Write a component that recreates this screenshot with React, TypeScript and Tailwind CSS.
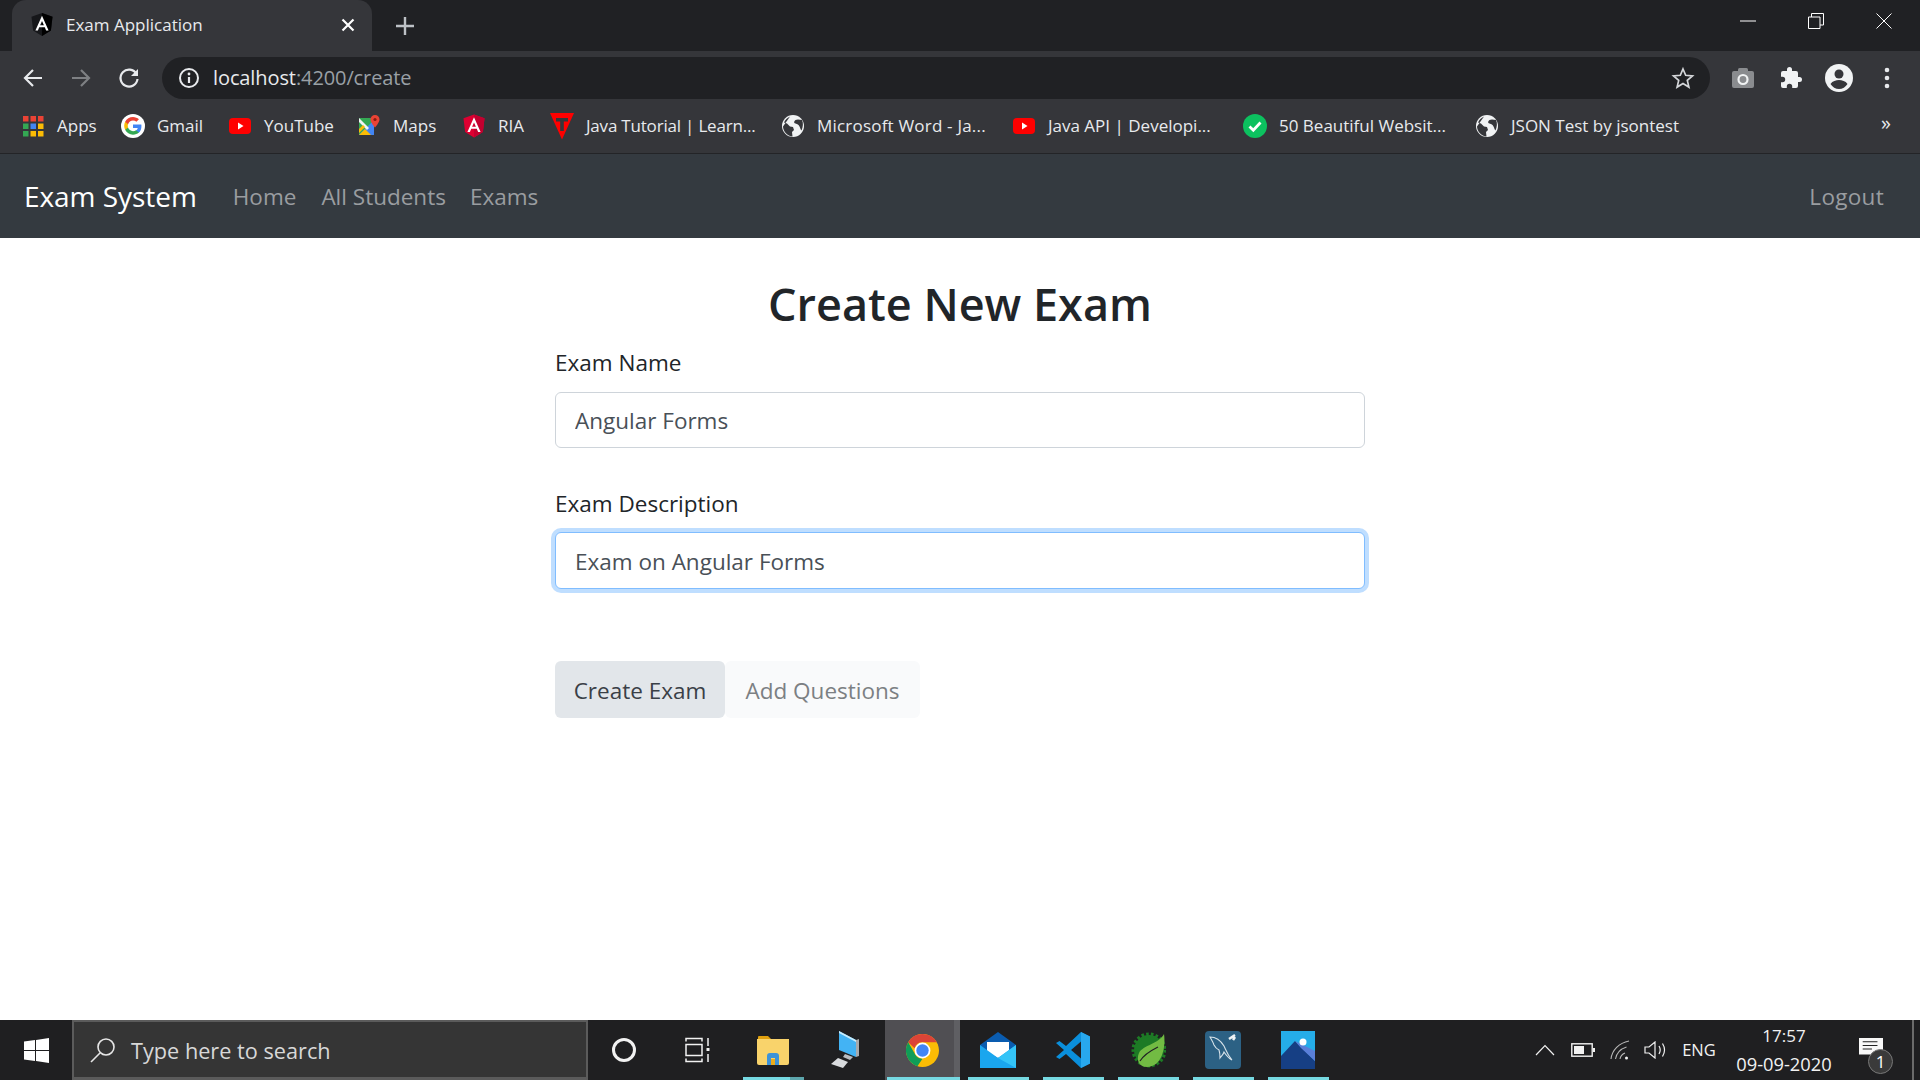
import React from "react";

const ui = "font-['Open_Sans','Noto_Sans',sans-serif]";

function Globe() {
  return (
    <svg width="24" height="24" viewBox="0 0 24 24">
      <circle cx="12" cy="12" r="11" fill="#f1f3f4" />
      <path d="M9 2.500c-2 1-5 3-6 6l3 1 3 3 3 .5 1 3-2 2 .5 4.500c-5-.5-9.500-5-9.500-10M21 6c-2-.5-5-1-6.500 0s-2 3 0 3.500 3 1 4 3 1 3 2 4c1.500-3.500 2-7.500.5-10.500z" fill="#35363a" />
    </svg>
  );
}

function YouTubeIcon() {
  return (
    <svg width="24" height="24" viewBox="0 0 24 24">
      <rect x="1" y="4" width="22" height="16" rx="4" fill="#f00" />
      <path d="M10 8.500v7l5.500-3.500z" fill="#fff" />
    </svg>
  );
}

function GoogleIcon() {
  return (
    <svg width="24" height="24" viewBox="0 0 48 48">
      <circle cx="24" cy="24" r="24" fill="#fff" />
      <g transform="translate(6 6) scale(.75)">
        <path fill="#4285F4" d="M46.500 24.500c0-1.600-.1-3.100-.4-4.500H24v9h12.700c-.6 3-2.200 5.400-4.700 7.100v5.900h7.600c4.400-4.100 6.900-10.100 6.900-17.500z" />
        <path fill="#34A853" d="M24 47c6.300 0 11.700-2.100 15.600-5.700L32 35.400c-2.100 1.400-4.800 2.300-8 2.300-6.100 0-11.300-4.100-13.200-9.700H3v6.100C6.900 41.800 14.800 47 24 47z" />
        <path fill="#FBBC05" d="M10.800 28c-.5-1.400-.8-2.900-.8-4.500s.3-3.100.8-4.500v-6.100H3C1.400 16 .5 19.600.5 23.500S1.400 31 3 34.100l7.800-6.100z" />
        <path fill="#EA4335" d="M24 9.300c3.500 0 6.600 1.200 9.100 3.600l6.700-6.700C35.700 2.400 30.300 0 24 0 14.800 0 6.900 5.200 3 12.900l7.800 6.100C12.700 13.400 17.900 9.300 24 9.300z" />
      </g>
    </svg>
  );
}

function AppsIcon() {
  const colors = ["#ea4335", "#ea4335", "#ea4335", "#34a853", "#4285f4", "#fbbc05", "#34a853", "#fbbc05", "#fbbc05"];
  return (
    <svg width="24" height="24" viewBox="0 0 24 24">
      {colors.map((c, i) => (
        <rect key={i} x={2 + (i % 3) * 7.500} y={2 + Math.floor(i / 3) * 7.500} width="5.500" height="5.500" fill={c} />
      ))}
    </svg>
  );
}

function MapsIcon() {
  return (
    <svg width="24" height="24" viewBox="0 0 24 24">
      <path d="M2 4h15v17H2z" fill="#34a853" />
      <path d="M2 21 17 6v15z" fill="#4285f4" />
      <path d="M2 21l6-6 6 6z" fill="#fbbc05" />
      <path d="M2 4l10 10-2 2-8-8z" fill="#f1f3f4" />
      <path d="M2 15l4-4 2 2-6 6z" fill="#fbbc05" />
      <path d="M18 1a4.500 4.500 0 0 0-4.500 4.500c0 3 4.500 8 4.500 8s4.500-5 4.500-8A4.500 4.500 0 0 0 18 1z" fill="#ea4335" />
      <circle cx="18" cy="5.500" r="1.600" fill="#8a1c12" />
    </svg>
  );
}

function AngularIcon({ bg, dark, size = 24 }: { bg: string; dark: string; size?: number }) {
  return (
    <svg width={size} height={size} viewBox="0 0 24 24">
      <path d="M12 .5 1.500 4.200l1.600 13.900L12 23.500l8.900-5.400 1.600-13.900z" fill={bg} />
      <path d="M12 .5v23l8.900-5.400 1.600-13.900z" fill={dark} />
      <path d="M12 3.200 5.400 18h2.500l1.300-3.300h5.600l1.300 3.300h2.500zm0 5.300 1.900 4.300h-3.800z" fill="#fff" />
    </svg>
  );
}

function TIcon() {
  return (
    <svg width="24" height="28" viewBox="0 0 24 28">
      <path d="M0 1h24L12 27.500z" fill="#f00" />
      <path d="M6 6h12v3.500h-4.200V19h-3.600V9.500H6z" fill="#35363a" />
    </svg>
  );
}

function CheckIcon() {
  return (
    <svg width="24" height="24" viewBox="0 0 24 24">
      <circle cx="12" cy="12" r="12" fill="#0cc15f" />
      <path d="M6.500 12.500l3.800 3.700 7.200-7.700" stroke="#fff" strokeWidth="2.800" fill="none" />
    </svg>
  );
}

function Bm({ icon, label, w, t = "tracking-[0px]" }: { icon: React.ReactNode; label: string; w: string; t?: string }) {
  return (
    <div className={`flex items-center gap-[12px] shrink-0 ${w}`}>
      <span className="w-[24px] h-[24px] flex items-center justify-center shrink-0">{icon}</span>
      <span className={`text-[17px] text-[#e8eaed] whitespace-nowrap leading-none mt-[-2px] ${t}`}>{label}</span>
    </div>
  );
}

function Slot({ active, strip, hl, children }: { active?: boolean; strip?: boolean; hl?: boolean; children?: React.ReactNode }) {
  return (
    <div className={`relative w-[75px] h-[60px] flex items-center justify-center shrink-0 ${hl ? "bg-[#504f53]" : ""}`}>
      {children}
      {active && <span className={`absolute bottom-0 h-[3px] bg-[#76d9e2] ${strip ? "left-[2px] right-0" : "left-[8px] right-[6px]"}`} />}
    </div>
  );
}

export default function App() {
  return (
    <div className={`w-[1920px] h-[1080px] flex flex-col overflow-hidden bg-white ${ui}`}>
      {/* tab strip */}
      <div className="h-[51px] bg-[#202124] flex items-end shrink-0 relative">
        <div className="ml-[12px] w-[360px] h-[51px] bg-[#35363a] rounded-t-[14px] flex items-center pl-[18px] pr-[16px] shrink-0">
          <span className="w-[24px] flex justify-center mt-[-2px]">
            <AngularIcon bg="#16171a" dark="#000" size={25} />
          </span>
          <span className="ml-[12px] text-[17px] text-[#e8eaed] leading-none mt-[-2px]">Exam Application</span>
          <span className="ml-auto w-[16px] h-[16px] flex items-center justify-center mt-[-2px]">
            <svg width="14" height="14" viewBox="0 0 14 14"><path d="M1.500 1.500l11 11M12.500 1.500l-11 11" stroke="#fff" strokeWidth="2.200" /></svg>
          </span>
        </div>
        <div className="ml-[24px] h-[51px] flex items-center mt-[-2px]">
          <svg width="18" height="18" viewBox="0 0 18 18"><path d="M9 0v18M0 9h18" stroke="#bdc1c6" strokeWidth="2.400" /></svg>
        </div>
        <div className="ml-auto h-[42px] self-start flex items-center">
          <span className="w-[68px] flex justify-center">
            <svg width="16" height="2" viewBox="0 0 16 2"><path d="M0 1h16" stroke="#fff" strokeWidth="1" /></svg>
          </span>
          <span className="w-[68px] flex justify-center">
            <svg width="16" height="16" viewBox="0 0 16 16" fill="none" stroke="#fff"><path d="M.5 4h11.500v11.500H.5zM3.500 4V.5h12v11.500H12" /></svg>
          </span>
          <span className="w-[68px] flex justify-center mr-[2px]">
            <svg width="16" height="16" viewBox="0 0 16 16" stroke="#fff"><path d="M.5.500l15 15M15.500.500l-15 15" /></svg>
          </span>
        </div>
      </div>

      {/* toolbar */}
      <div className="h-[48px] bg-[#35363a] flex items-center shrink-0 pl-[9px] pt-[6px]">
        <span className="w-[48px] flex justify-center">
          <svg width="24" height="24" viewBox="0 0 24 24"><path d="M21 12H5M12 4l-8 8 8 8" stroke="#e8eaed" strokeWidth="2.200" fill="none" /></svg>
        </span>
        <span className="w-[48px] flex justify-center">
          <svg width="24" height="24" viewBox="0 0 24 24"><path d="M3 12h16M12 4l8 8-8 8" stroke="#7e8083" strokeWidth="2.200" fill="none" /></svg>
        </span>
        <span className="w-[48px] flex justify-center">
          <svg width="24" height="24" viewBox="0 0 24 24"><path d="M19.500 8A8.500 8.500 0 1 0 20.500 13" stroke="#e8eaed" strokeWidth="2.200" fill="none" /><path d="M21 3v7h-7z" fill="#e8eaed" /></svg>
        </span>
        <div className="ml-[9px] w-[1548px] h-[42px] rounded-full bg-[#202124] flex items-center pl-[16px] pr-[15px] shrink-0">
          <svg width="22" height="22" viewBox="0 0 22 22" fill="none"><circle cx="11" cy="11" r="9" stroke="#e8eaed" strokeWidth="2" /><path d="M11 10v6" stroke="#e8eaed" strokeWidth="2.200" /><circle cx="11" cy="7" r="1.400" fill="#e8eaed" /></svg>
          <span className="ml-[13px] text-[20px] leading-none tracking-[-0.1px] text-[#e8eaed]">localhost<span className="text-[#9aa0a6]">:4200/create</span></span>
          <span className="ml-auto flex">
            <svg width="24" height="24" viewBox="0 0 24 24"><path d="M12 3l2.700 6.300 6.800.6-5.200 4.500 1.600 6.700L12 17.500l-5.900 3.600 1.600-6.700-5.200-4.500 6.800-.6z" fill="none" stroke="#d5d7da" strokeWidth="1.700" /></svg>
          </span>
        </div>
        <span className="ml-[9px] w-[48px] flex justify-center">
          <svg width="24" height="24" viewBox="0 0 24 24"><rect x="1" y="5" width="22" height="17" rx="2" fill="#8a8c8f" /><rect x="7" y="2" width="10" height="5" rx="1.500" fill="#8a8c8f" /><circle cx="12" cy="13.500" r="4.500" fill="none" stroke="#f1f3f4" strokeWidth="2.200" /></svg>
        </span>
        <span className="w-[48px] flex justify-center">
          <svg width="24" height="24" viewBox="0 0 24 24"><path d="M20.500 11H19V7a2 2 0 0 0-2-2h-4V3.500a2.500 2.500 0 0 0-5 0V5H4a2 2 0 0 0-2 2v3.800h1.500a2.700 2.700 0 0 1 0 5.400H2V20a2 2 0 0 0 2 2h3.800v-1.500a2.700 2.700 0 0 1 5.400 0V22H17a2 2 0 0 0 2-2v-4h1.500a2.500 2.500 0 0 0 0-5z" fill="#f1f3f4" /></svg>
        </span>
        <span className="w-[48px] flex justify-center">
          <svg width="28" height="28" viewBox="0 0 28 28"><circle cx="14" cy="14" r="14" fill="#f1f3f4" /><circle cx="14" cy="10" r="4.500" fill="#35363a" /><path d="M5.500 20c2-3 5.500-4 8.500-4s6.500 1 8.500 4c-2 3-5 5-8.500 5s-6.500-2-8.500-5z" fill="#35363a" /></svg>
        </span>
        <span className="w-[48px] flex justify-center">
          <svg width="6" height="24" viewBox="0 0 6 24" fill="#e8eaed"><circle cx="3" cy="4" r="2.300" /><circle cx="3" cy="12" r="2.300" /><circle cx="3" cy="20" r="2.300" /></svg>
        </span>
      </div>

      {/* bookmarks */}
      <div className="h-[55px] bg-[#35363a] border-b border-[#232427] flex items-center shrink-0 pl-[21px] relative">
        <Bm icon={<AppsIcon />} label="Apps" w="w-[100px]" />
        <Bm icon={<GoogleIcon />} label="Gmail" w="w-[107px]" />
        <Bm icon={<YouTubeIcon />} label="YouTube" w="w-[129px]" />
        <Bm icon={<MapsIcon />} label="Maps" w="w-[105px]" />
        <Bm icon={<AngularIcon bg="#dd0031" dark="#c3002f" size={26} />} label="RIA" w="w-[88px]" />
        <Bm icon={<TIcon />} label="Java Tutorial | Learn..." w="w-[231px]" t="tracking-[-0.2px]" />
        <Bm icon={<Globe />} label="Microsoft Word - Ja..." w="w-[231px]" t="tracking-[0.2px]" />
        <Bm icon={<YouTubeIcon />} label="Java API | Developi..." w="w-[231px]" />
        <Bm icon={<CheckIcon />} label="50 Beautiful Websit..." w="w-[232px]" />
        <Bm icon={<Globe />} label="JSON Test by jsontest" w="w-[205px]" />
        <span className="ml-auto mr-[29px] text-[20px] leading-none text-[#e8eaed] mt-[-6px]">»</span>
      </div>

      {/* navbar */}
      <nav className="h-[84px] bg-[#343a40] flex items-center shrink-0 pl-[24px] pr-[36px]">
        <span className="text-[28px] text-white leading-none tracking-[-0.05px]">Exam System</span>
        <span className="ml-[36px] text-[22.5px] text-[#9a9da0] leading-none mt-[2px]">Home</span>
        <span className="ml-[25px] text-[22.5px] text-[#9a9da0] leading-none mt-[2px]">All Students</span>
        <span className="ml-[24px] text-[22.5px] text-[#9a9da0] leading-none mt-[2px]">Exams</span>
        <span className="ml-auto text-[22.5px] text-[#9a9da0] leading-none mt-[2px] tracking-[0.3px]">Logout</span>
      </nav>

      {/* page */}
      <main className="flex-1 min-h-0 bg-white">
        <div className="w-[810px] mx-auto">
          <h2 className="text-[45px] font-semibold text-[#212529] text-center leading-none pt-[43px]">Create New Exam</h2>
          <div className="mt-[20px] text-[22.5px] text-[#212529] leading-[34px] h-[36px]">Exam Name</div>
          <input readOnly value="Angular Forms" className="mt-[10px] block w-full h-[56px] border border-[#ced4da] rounded-[6px] px-[19px] pt-[1px] text-[22.5px] text-[#495057] outline-none bg-white" />
          <div className="mt-[39px] text-[22.5px] text-[#212529] leading-[34px] h-[36px]">Exam Description</div>
          <input readOnly value="Exam on Angular Forms" className="mt-[9px] block w-full h-[57px] border border-[#80bdff] rounded-[6px] px-[19px] pt-[1px] text-[22.5px] text-[#495057] outline-none bg-white shadow-[0_0_0_4px_rgba(0,123,255,0.25)]" />
          <div className="mt-[72px] flex">
            <button className="w-[170px] h-[57px] rounded-[6px] bg-[#e2e6ea] pt-[2px] text-[22.5px] text-[#3a4047]">Create Exam</button>
            <button className="w-[195px] h-[57px] rounded-[6px] bg-[#f9fafb] pt-[2px] text-[22.5px] text-[#7c8083]">Add Questions</button>
          </div>
        </div>
      </main>

      {/* taskbar */}
      <footer className="h-[60px] bg-[#1f1f21] flex items-center shrink-0 relative">
        <div className="w-[72px] flex justify-center">
          <svg width="25" height="25" viewBox="0 0 25 25" fill="#fff"><path d="M0 3.500l11-1.500v10H0zM12 1.900 25 0v12H12zM0 13h11v10L0 21.500zM12 13h13v12l-13-1.900z" /></svg>
        </div>
        <div className="w-[516px] h-[60px] bg-[#353535] border-2 border-[#5b5b5b] border-b-[3px] flex items-center pl-[16px] shrink-0">
          <svg width="26" height="26" viewBox="0 0 26 26" fill="none" stroke="#e6e6e6" strokeWidth="1.600"><circle cx="16" cy="10" r="8" /><path d="M10 16 1 25" /></svg>
          <span className="ml-[15px] text-[21.700px] text-[#d8d8d8] leading-none mt-[3px]">Type here to search</span>
        </div>
        <div className="w-[72px] flex justify-center shrink-0">
          <span className="w-[24px] h-[24px] rounded-full border-[3px] border-[#f2f2f2]" />
        </div>
        <div className="w-[75px] flex justify-center shrink-0">
          <svg width="26" height="26" viewBox="0 0 26 26" fill="none" stroke="#f2f2f2" strokeWidth="1.500"><path d="M1 4.500V1.500h16v3M1 21.500v3h16v-3M1 7.500h16v11H1zM23 1v8M23 17v8" /><rect x="21.500" y="11" width="3" height="3" fill="#f2f2f2" stroke="none" /></svg>
        </div>
        <Slot active>
          <svg width="32" height="30" viewBox="0 0 32 30"><path d="M1 2a1 1 0 0 1 1-1h9l3 3h-13z" fill="#e0a00e" /><path d="M0 4h32v24a2 2 0 0 1-2 2H2a2 2 0 0 1-2-2z" fill="#f9d36b" /><path d="M10 30v-9a3 3 0 0 1 3-3h6a3 3 0 0 1 3 3v9h-4v-7h-4v7z" fill="#3e93d8" /><rect x="14" y="24" width="4" height="6" fill="#edad1c" /></svg>
          <span className="absolute bottom-0 left-[55px] right-[6px] h-[3px] bg-[#5da6ad] z-10" />
        </Slot>
        <Slot>
          <svg width="34" height="40" viewBox="0 0 34 40"><path d="M8 1l17 9v17L8 20z" fill="#43b3f4" /><path d="M8 1l17 9v2L8 3z" fill="#c9ecfc" /><path d="M25 10l3-1v17l-3 1z" fill="#a7a9ac" /><path d="M14 24l8 3-3 3-7-3z" fill="#b9bcc0" /><path d="M7 28l10 4-5 6L0 34z" fill="#d9dbde" /></svg>
        </Slot>
        <Slot hl active strip>
          <svg width="33" height="33" viewBox="0 0 48 48">
            <circle cx="24" cy="24" r="24" fill="#fbbc05" />
            <path d="M24 0a24 24 0 0 1 20.800 12H24a12 12 0 0 0-11.500 8.600L3.200 12A24 24 0 0 1 24 0z" fill="#db4437" />
            <path d="M3.200 12 13.600 30a12 12 0 0 0 10.400 6l-7.400 11A24 24 0 0 1 3.200 12z" fill="#0f9d58" />
            <circle cx="24" cy="24" r="11.500" fill="#fff" />
            <circle cx="24" cy="24" r="9" fill="#4285f4" />
          </svg>
          <span className="absolute right-0 top-0 bottom-0 w-[6px] bg-[#5f5f63]" />
        </Slot>
        <Slot active>
          <svg width="36" height="36" viewBox="0 0 36 36"><path d="M0 13 18 0l18 13v23H0z" fill="#0a5cb0" /><path d="M7 10h22v10l-11 6-11-6z" fill="#fff" /><path d="M0 13l18 13 18-13v23H0z" fill="#1aa6ee" /><path d="M18 26l18-13v23z" fill="#34c4f7" /></svg>
        </Slot>
        <Slot active>
          <svg width="36" height="36" viewBox="0 0 36 36"><path d="M26 0l9 4.500v27L26 36 11 22l-6.500 5L1 25l8-7-8-7 3.500-2L11 14z" fill="#0a8fdc" /><path d="M26 0l9 4.500v27L26 36V26l-10-8 10-8z" fill="#28a8ee" /><path d="M26 9.500 16 18l10 8.500z" fill="#1f2024" /></svg>
        </Slot>
        <Slot active>
          <svg width="36" height="38" viewBox="0 0 36 38"><circle cx="19" cy="19" r="15" fill="#1d7a25" stroke="#1d7a25" strokeWidth="5" strokeDasharray="2.500 2" /><path d="M34 3c2 13-2 33-17 33C9 36 6 29 9 22 13 14 29 13 34 3z" fill="#72bb43" /><path d="M10 30c5-8 12-11 18-14" stroke="#1f2024" strokeWidth="1.200" fill="none" /></svg>
        </Slot>
        <Slot active>
          <svg width="36" height="38" viewBox="0 0 36 38"><rect width="36" height="38" rx="4" fill="#2c6184" /><path d="M5 6c6 0 11 4 14 9 2 4 3 8 8 14-4-2-6-5-8-8-1 3-2 3-4 6 0-3 0-5-1-8-2-1-4-3-5-5-1-3-3-6-4-8z" fill="none" stroke="#d7e3ea" strokeWidth="1.100" /><path d="M24 8l6-4M28 9l2-3" stroke="#eef3f5" strokeWidth="2.500" /></svg>
        </Slot>
        <Slot active>
          <svg width="34" height="38" viewBox="0 0 34 38"><rect width="34" height="38" fill="#25ade9" /><path d="M0 38V25l14-15 20 20v8z" fill="#163f84" /><path d="M14 10 34 20v10L20 17z" fill="#5a7fd8" /><circle cx="22" cy="11" r="3.500" fill="#fff" /></svg>
        </Slot>
        <div className="ml-auto flex items-center h-[60px] shrink-0">
          <span className="w-[38px] flex justify-center">
            <svg width="20" height="12" viewBox="0 0 20 12" fill="none" stroke="#f2f2f2" strokeWidth="1.200"><path d="M1 11 10 1.500l9 9.500" /></svg>
          </span>
          <span className="w-[37px] flex justify-center">
            <svg width="24" height="14" viewBox="0 0 24 14"><rect x=".8" y=".8" width="20.400" height="12.400" fill="none" stroke="#f2f2f2" strokeWidth="1.400" /><rect x="3" y="3" width="10" height="8" fill="#f2f2f2" /><rect x="22" y="5" width="2" height="4" fill="#f2f2f2" /></svg>
          </span>
          <span className="w-[37px] flex justify-center">
            <svg width="20" height="20" viewBox="0 0 20 20" fill="none" stroke="#b8b8b8" strokeWidth="1.100"><path d="M1 19C2 10 9 3 19 1M5.500 19c1-6 5-10 11-12M10 19c.5-3 2.500-5 5-6" /><circle cx="16.500" cy="18" r="1.500" fill="#f2f2f2" stroke="none" /></svg>
          </span>
          <span className="w-[36px] flex justify-center">
            <svg width="24" height="18" viewBox="0 0 24 18" fill="none" stroke="#f2f2f2" strokeWidth="1.200"><path d="M1 6v6h4l6 5V1L5 6zM15 5c1.500 2.500 1.500 5.500 0 8M18.500 2.500c2.500 4 2.500 9 0 13" /></svg>
          </span>
          <span className="w-[56px] text-center text-[16.500px] leading-none text-[#f2f2f2] ml-[-3px] mt-[1px]">ENG</span>
          <div className="w-[112px] ml-[1px] flex flex-col items-center text-[#f2f2f2] leading-none gap-[11px] mt-[0px]">
            <span className="text-[17px]">17:57</span>
            <span className="text-[18.300px]">09-09-2020</span>
          </div>
          <span className="relative w-[72px] h-[60px] flex items-center justify-center">
            <svg width="24" height="24" viewBox="0 0 26 26" className="ml-[-10px]"><path d="M0 0h26v18h-8l-3 5-3-5H0z" fill="#f8f8f8" /><path d="M4 4h16M4 8h16M4 12h10" stroke="#222" strokeWidth="1.100" /></svg>
            <span className="absolute left-[28px] top-[29px] w-[25px] h-[25px] rounded-full bg-[#3a3a3a] border border-[#777] text-[17px] text-white flex items-center justify-center leading-none">1</span>
          </span>
          <span className="w-[8px] h-[60px] flex justify-start"><span className="w-[2px] h-[60px] bg-[#6b6b6b]" /></span>
        </div>
      </footer>
    </div>
  );
}
